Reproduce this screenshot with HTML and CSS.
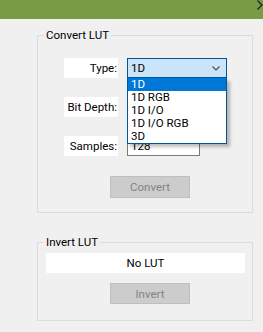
FILE: index.html
```html
<!DOCTYPE html>
<html lang="en">
<head>
  <meta charset="UTF-8">
  <title>LUT Tools</title>
  <link rel="stylesheet" href="styles.css">
</head>
<body>

  <div class="window">
    <!-- TITLE BAR -->
    <div class="titlebar">
      <svg class="close" width="6" height="10" viewBox="0 0 6 10">
        <path d="M0.5 0.5 L5 5 L0.5 9.5" fill="none" stroke="#1a1a1a" stroke-width="1.2"/>
      </svg>
    </div>

    <div class="content">
      <!-- CONVERT -->
      <div class="group convert">
        <span class="legend">Convert LUT</span>
        <div class="fields">
          <div class="row">
            <span class="label">Type:</span>
            <div class="combo-wrap">
              <div class="combo open">
                <span>1D</span>
                <svg class="chevron" width="8" height="5" viewBox="0 0 8 5">
                  <path d="M0.5 0.5 L4 4 L7.5 0.5" fill="none" stroke="#4d4d4d" stroke-width="1.1"/>
                </svg>
              </div>
              <ul class="droplist">
                <li class="selected">1D</li>
                <li>1D RGB</li>
                <li>1D I/O</li>
                <li>1D I/O RGB</li>
                <li>3D</li>
              </ul>
            </div>
          </div>
          <div class="row">
            <span class="label">Bit Depth:</span>
            <!-- hidden under the open list -->
            <div class="combo"></div>
          </div>
          <div class="row">
            <span class="label">Samples:</span>
            <input class="field" type="text" value="128">
          </div>
        </div>
        <button class="btn convert-btn" disabled>Convert</button>
      </div>

      <!-- INVERT -->
      <div class="group invert">
        <span class="legend">Invert LUT</span>
        <div class="status">No LUT</div>
        <button class="btn invert-btn" disabled>Invert</button>
      </div>
    </div>
  </div>

</body>
</html>
```

FILE: styles.css
```css
body {
  margin: 0;
  font-family: Roboto, 'Liberation Sans', sans-serif;
  font-size: 11px;
  color: #000;
}
.window {
  width: 263px;
  height: 332px;
  background: #f0f0f0;
  overflow: hidden;
}
.titlebar {
  height: 19px;
  background: #789b45;
  position: relative;
}
.close {
  position: absolute;
  top: 0;
  right: 0;
}
.content {
  display: flex;
  flex-direction: column;
  gap: 29px;
  padding: 16px 10px 0 37px;
}
.group {
  position: relative;
  border: 1px solid #dcdcdc;
  box-sizing: border-box;
}
.legend {
  position: absolute;
  top: -8px;
  left: 6px;
  padding: 0 2px;
  line-height: 14px;
  background: #f0f0f0;
  font-size: 11.5px;
}
.convert {
  height: 178px;
  padding: 22px 0 0 26px;
}
.fields {
  display: flex;
  flex-direction: column;
  gap: 19px;
}
.row {
  display: flex;
  gap: 9px;
  height: 20px;
}
.label {
  width: 54px;
  background: #fff;
  text-align: right;
  line-height: 20px;
  padding-right: 1px;
  box-sizing: border-box;
  font-size: 11.5px;
}
.combo-wrap {
  position: relative;
}
.combo {
  width: 100px;
  height: 20px;
  box-sizing: border-box;
  border: 1px solid #7a7a7a;
  background: #e5e5e5;
  display: flex;
  align-items: center;
  justify-content: space-between;
  padding: 0 6px 0 3px;
  font-size: 11.5px;
}
.combo.open {
  background: #cce4f7;
  border-color: #005499;
}
.droplist {
  position: absolute;
  top: 20px;
  left: 0;
  width: 100px;
  box-sizing: border-box;
  margin: 0;
  padding: 0;
  list-style: none;
  background: #fff;
  border: 1px solid #005499;
  border-top: none;
  box-shadow: 3px 3px 3px rgba(0, 0, 0, 0.25);
  z-index: 2;
}
.droplist li {
  height: 13px;
  line-height: 13px;
  padding-left: 3px;
  font-size: 11.5px;
}
.droplist li.selected {
  background: #0078d7;
  color: #fff;
}
.field {
  width: 73px;
  height: 20px;
  box-sizing: border-box;
  margin: 0;
  border: 1px solid #7a7a7a;
  padding: 0 3px;
  font-family: inherit;
  font-size: 11.5px;
  background: #fff;
}
.btn {
  display: block;
  width: 80px;
  height: 22px;
  box-sizing: border-box;
  background: #cccccc;
  border: 1px solid #bfbfbf;
  color: #838383;
  font-family: inherit;
  font-size: 11.5px;
  padding: 0;
}
.convert-btn {
  margin: 20px 0 0 46px;
}
.invert {
  height: 79px;
  padding: 10px 7px 0 8px;
}
.status {
  height: 20px;
  line-height: 20px;
  background: #fff;
  text-align: center;
  font-size: 11.5px;
}
.invert-btn {
  margin: 10px 0 0 64px;
  height: 21px;
}
```
